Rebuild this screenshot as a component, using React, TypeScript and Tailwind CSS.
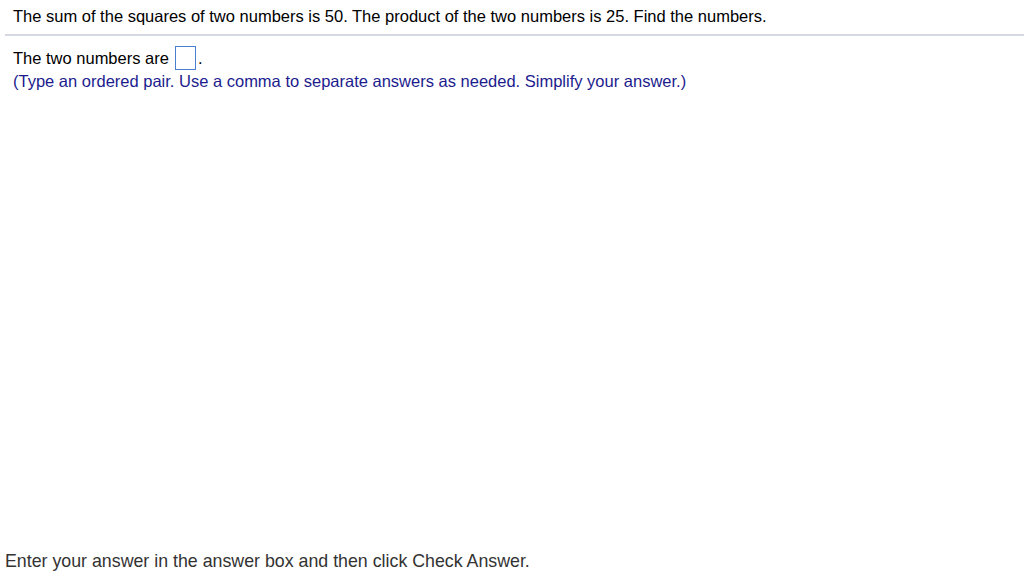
export default function App() {
  return (
    <div className="w-[1024px] h-[577px] bg-white flex flex-col overflow-hidden" style={{ fontFamily: '"Liberation Sans", Arial, sans-serif' }}>
      <div className="pl-[13px] pt-[7px] h-[34px] text-[16.5px] leading-[19px] text-black">
        The sum of the squares of two numbers is 50. The product of the two numbers is 25. Find the numbers.
      </div>
      <div className="ml-[5px] h-[2px] bg-[#d6d9e4]" />
      <div className="pl-[13px] pt-[10px] flex flex-col">
        <div className="flex items-center text-[16.5px] text-black h-[24px]">
          <span>The two numbers are</span>
          <span className="ml-[6px] w-[21px] h-[24px] border border-[#4a7fd0] inline-block" />
          <span className="ml-[2px]">.</span>
        </div>
        <div className="text-[16.5px] leading-[19px] mt-[2px] text-[#1c1c8e]">
          (Type an ordered pair. Use a comma to separate answers as needed. Simplify your answer.)
        </div>
      </div>
      <div className="flex-1" />
      <div className="pl-[5px] pb-[5px] text-[17.8px] leading-[21px] text-[#333333]">
        Enter your answer in the answer box and then click Check Answer.
      </div>
    </div>
  );
}
